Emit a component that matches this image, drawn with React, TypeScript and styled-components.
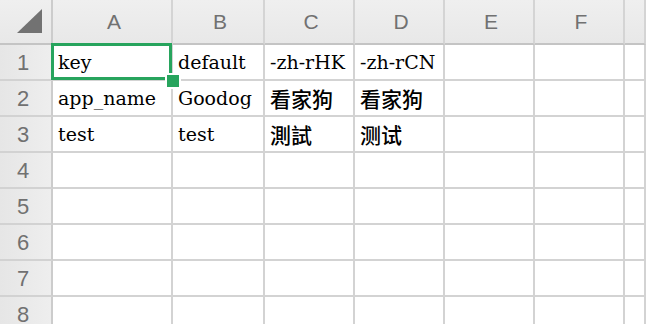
import React from "react";
import styled, { createGlobalStyle } from "styled-components";

const Global = createGlobalStyle`
  html, body { margin: 0; padding: 0; background: #ffffff; overflow: hidden; }
  body { width: 646px; height: 324px; }
`;

const Sheet = styled.div`
  display: grid;
  grid-template-columns: 53px 120px 92px 90px 90px 90px 90px 1fr;
  grid-template-rows: 45px repeat(8, 36px);
  width: 646px;
  height: 324px;
  overflow: hidden;
  background: #ffffff;
`;

const Corner = styled.div`
  box-sizing: border-box;
  background: linear-gradient(180deg, #efefef 0%, #e8e8e8 100%);
  border-right: 2px solid #cccccc;
  border-bottom: 2px solid #c4c4c4;
  display: flex;
  align-items: flex-start;
  justify-content: flex-start;
  padding: 9px 0 0 17px;
`;

const ColHead = styled.div`
  box-sizing: border-box;
  background: linear-gradient(180deg, #efefef 0%, #e8e8e8 100%);
  border-right: 2px solid #d4d4d4;
  border-bottom: 2px solid #c4c4c4;
  display: flex;
  align-items: center;
  justify-content: center;
  padding-left: 4px;
  font-family: "Liberation Sans", Arial, sans-serif;
  font-size: 21px;
  color: #717171;
`;

const RowHead = styled.div`
  box-sizing: border-box;
  background: linear-gradient(90deg, #e6e6e6 0%, #eeeeee 100%);
  border-right: 2px solid #cccccc;
  border-bottom: 2px solid #d2d2d2;
  display: flex;
  align-items: center;
  justify-content: center;
  padding-right: 5px;
  padding-top: 1px;
  font-family: "Liberation Sans", Arial, sans-serif;
  font-size: 22px;
  color: #717171;
`;

const Cell = styled.div<{ $cjk?: boolean }>`
  position: relative;
  box-sizing: border-box;
  border-right: 2px solid #d3d3d3;
  border-bottom: 2px solid #d3d3d3;
  padding: 1px 0 0 5px;
  line-height: 33px;
  white-space: nowrap;
  color: #000000;
  font-family: ${(p) =>
    p.$cjk
      ? `"Noto Sans CJK TC", "Noto Sans CJK SC", sans-serif`
      : `"DejaVu Serif", serif`};
  font-size: ${(p) => (p.$cjk ? "21px" : "19px")};
  font-weight: ${(p) => (p.$cjk ? 500 : 400)};
`;

const Selection = styled.div`
  position: absolute;
  left: -2px;
  top: -2px;
  right: -1px;
  bottom: -1px;
  border: 3px solid #27a45d;
  pointer-events: none;
`;

const Handle = styled.div`
  position: absolute;
  left: 112px;
  top: 28px;
  width: 12px;
  height: 12px;
  background: #27a45d;
  border: 2px solid #ffffff;
  z-index: 2;
`;

const cols = ["A", "B", "C", "D", "E", "F", ""];

type Val = { t: string; cjk?: boolean };

const data: Val[][] = [
  [{ t: "key" }, { t: "default" }, { t: "-zh-rHK" }, { t: "-zh-rCN" }],
  [{ t: "app_name" }, { t: "Goodog" }, { t: "看家狗", cjk: true }, { t: "看家狗", cjk: true }],
  [{ t: "test" }, { t: "test" }, { t: "測試", cjk: true }, { t: "测试", cjk: true }],
];

export default function App() {
  const rows = [1, 2, 3, 4, 5, 6, 7, 8];
  return (
    <>
      <Global />
      <Sheet>
        <Corner>
          <svg width="25" height="24" viewBox="0 0 25 24">
            <polygon points="0,24 25,24 25,0" fill="#727272" />
          </svg>
        </Corner>
        {cols.map((c, i) => (
          <ColHead key={`h${i}`}>{c}</ColHead>
        ))}
        {rows.map((r, ri) => (
          <React.Fragment key={r}>
            <RowHead>{r}</RowHead>
            {cols.map((_, ci) => {
              const v = data[ri]?.[ci];
              return (
                <Cell key={ci} $cjk={v?.cjk}>
                  {v?.t ?? ""}
                  {ri === 0 && ci === 0 && (
                    <>
                      <Selection />
                      <Handle />
                    </>
                  )}
                </Cell>
              );
            })}
          </React.Fragment>
        ))}
      </Sheet>
    </>
  );
}
